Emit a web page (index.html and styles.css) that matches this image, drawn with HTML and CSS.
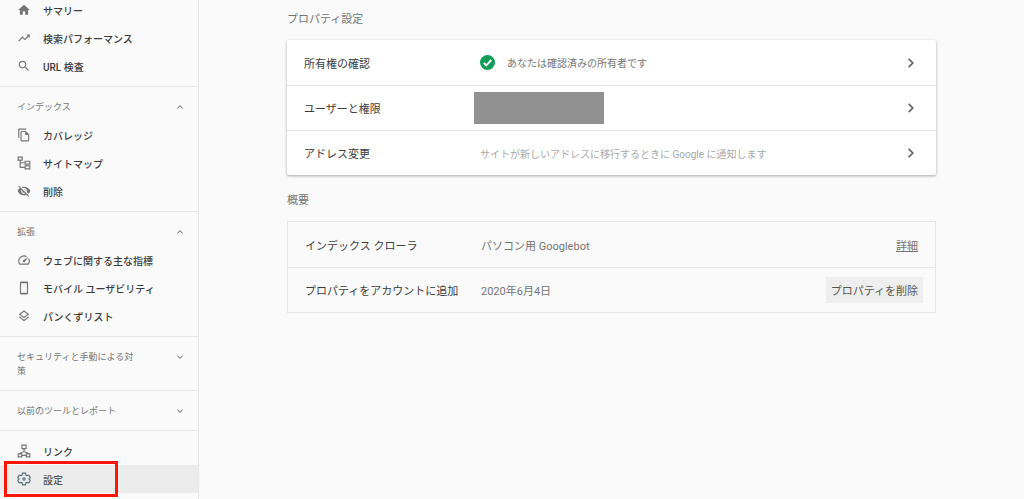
FILE: index.html
```html
<!DOCTYPE html>
<html lang="ja">
<head>
    <meta charset="UTF-8">
    <meta name="viewport" content="width=device-width, initial-scale=1.0">
    <title>設定</title>
    <link rel="stylesheet" href="styles.css">
</head>
<body>
    <div class="layout">
        <nav class="sidebar">
            <div class="group open">
                <a class="item" href="#">
                    <svg class="icon" viewBox="0 0 24 24"><path d="M10 20v-6h4v6h5v-8h3L12 3 2 12h3v8z"/></svg>
                    サマリー
                </a>
                <a class="item" href="#">
                    <svg class="icon" viewBox="0 0 24 24"><path d="M16 6l2.29 2.29-4.88 4.88-4-4L2 16.59 3.41 18l6-6 4 4 6.3-6.29L22 12V6z"/></svg>
                    検索パフォーマンス
                </a>
                <a class="item" href="#">
                    <svg class="icon" viewBox="0 0 24 24"><path d="M15.5 14h-.79l-.28-.27A6.47 6.47 0 0 0 16 9.5 6.5 6.5 0 1 0 9.5 16c1.61 0 3.09-.59 4.23-1.57l.27.28v.79l5 4.99L20.49 19l-4.99-5zm-6 0a4.5 4.5 0 1 1 0-9 4.5 4.5 0 0 1 0 9z"/></svg>
                    URL 検査
                </a>
            </div>

            <div class="group open">
                <button class="group-title" type="button">
                    インデックス
                    <svg class="icon chevron" viewBox="0 0 24 24"><path d="M12 8l-6 6 1.41 1.41L12 10.83l4.59 4.58L18 14z"/></svg>
                </button>
                <a class="item" href="#">
                    <svg class="icon" viewBox="0 0 24 24"><path d="M16 1H4a2 2 0 0 0-2 2v14h2V3h12V1zm-1 4H8a2 2 0 0 0-2 2v14c0 1.100.9 2 2 2h11a2 2 0 0 0 2-2V11l-6-6zM8 21V7h6v5h5v9H8z"/></svg>
                    カバレッジ
                </a>
                <a class="item" href="#">
                    <svg class="icon line" viewBox="0 0 24 24"><path d="M2 2h7v5H2zM14 9h8v5h-8zM14 17h8v5h-8zM5.500 7v12.500H14M5.500 11.500H14"/></svg>
                    サイトマップ
                </a>
                <a class="item" href="#">
                    <svg class="icon" viewBox="0 0 24 24"><path d="M12 7a5 5 0 0 1 4.640 6.830l2.920 2.920A11.820 11.820 0 0 0 22.990 12C21.260 7.610 16.990 4.500 11.990 4.500c-1.400 0-2.740.250-3.980.700l2.160 2.160C10.740 7.130 11.350 7 12 7zM2 4.270l2.280 2.280.460.460A11.800 11.800 0 0 0 1 12c1.730 4.390 6 7.500 11 7.500 1.550 0 3.030-.300 4.380-.840l.420.420L19.730 22 21 20.730 3.270 3 2 4.270zM7.530 9.800l1.550 1.550A2.820 2.820 0 0 0 9 12a3 3 0 0 0 3.650 2.920l1.550 1.550A5 5 0 0 1 7.530 9.800zm4.310-.780l3.150 3.150.020-.160a3 3 0 0 0-3-3l-.170.010z"/></svg>
                    削除
                </a>
            </div>

            <div class="group open">
                <button class="group-title" type="button">
                    拡張
                    <svg class="icon chevron" viewBox="0 0 24 24"><path d="M12 8l-6 6 1.41 1.41L12 10.83l4.59 4.58L18 14z"/></svg>
                </button>
                <a class="item" href="#">
                    <svg class="icon" viewBox="0 0 24 24"><path d="M20.380 8.570l-1.230 1.850a8 8 0 0 1-.220 7.580H5.070A8 8 0 0 1 15.580 6.850l1.850-1.230A10 10 0 0 0 3.350 19a2 2 0 0 0 1.720 1h13.850a2 2 0 0 0 1.740-1 10 10 0 0 0-.270-10.440zM10.590 15.410a2 2 0 0 0 2.830 0l5.660-8.490-8.490 5.660a2 2 0 0 0 0 2.830z"/></svg>
                    ウェブに関する主な指標
                </a>
                <a class="item" href="#">
                    <svg class="icon" viewBox="0 0 24 24"><path d="M17 1H7a2 2 0 0 0-2 2v18a2 2 0 0 0 2 2h10a2 2 0 0 0 2-2V3a2 2 0 0 0-2-2zm0 19H7V4h10v16z"/></svg>
                    モバイル ユーザビリティ
                </a>
                <a class="item" href="#">
                    <svg class="icon" viewBox="0 0 24 24"><path d="M11.990 18.540l-7.370-5.730L3 14.070l9 7 9-7-1.630-1.270-7.380 5.740zM12 16l7.360-5.730L21 9l-9-7-9 7 1.630 1.270L12 16zm0-11.470L17.740 9 12 13.470 6.260 9 12 4.530z"/></svg>
                    パンくずリスト
                </a>
            </div>

            <div class="group">
                <button class="group-title" type="button">
                    <span>セキュリティと手動による対策</span>
                    <svg class="icon chevron" viewBox="0 0 24 24"><path d="M16.590 8.590L12 13.170 7.410 8.590 6 10l6 6 6-6z"/></svg>
                </button>
            </div>

            <div class="group">
                <button class="group-title" type="button">
                    以前のツールとレポート
                    <svg class="icon chevron" viewBox="0 0 24 24"><path d="M16.590 8.590L12 13.170 7.410 8.590 6 10l6 6 6-6z"/></svg>
                </button>
            </div>

            <div class="group">
                <a class="item" href="#">
                    <svg class="icon line" viewBox="0 0 24 24"><path d="M8.500 2h7v6h-7zM2 17h6v5H2zM16 17h6v5h-6zM12 8v5M5 17v-1l7-3 7 3v1M8 19.500h8"/></svg>
                    リンク
                </a>
                <a class="item selected" href="#">
                    <svg class="icon line" viewBox="0 0 24 24"><path d="M9.500 2h5l.7 3.200 2 1.100 3.100-1 2.500 4.300-2.400 2.300v.2l2.400 2.300-2.500 4.300-3.100-1-2 1.100-.7 3.200h-5l-.7-3.200-2-1.100-3.100 1-2.500-4.300 2.400-2.300v-.2L1.200 9.600l2.500-4.300 3.100 1 2-1.100z"/><circle cx="12" cy="12" r="2"/></svg>
                    設定
                </a>
            </div>
        </nav>

        <main>
            <h2>プロパティ設定</h2>
            <div class="card raised">
                <a class="row" href="#">
                    <span class="label">所有権の確認</span>
                    <span class="value status">
                        <svg class="check" viewBox="0 0 24 24"><circle cx="12" cy="12" r="12"/><path d="M6 12.500l4 4 8-8.500"/></svg>
                        あなたは確認済みの所有者です
                    </span>
                    <svg class="arrow" viewBox="0 0 24 24"><path d="M8 5l7 7-7 7"/></svg>
                </a>
                <a class="row" href="#">
                    <span class="label">ユーザーと権限</span>
                    <span class="value"><span class="masked"></span></span>
                    <svg class="arrow" viewBox="0 0 24 24"><path d="M8 5l7 7-7 7"/></svg>
                </a>
                <a class="row" href="#">
                    <span class="label">アドレス変更</span>
                    <span class="value hint">サイトが新しいアドレスに移行するときに Google に通知します</span>
                    <svg class="arrow" viewBox="0 0 24 24"><path d="M8 5l7 7-7 7"/></svg>
                </a>
            </div>

            <h2>概要</h2>
            <div class="card outlined">
                <div class="row">
                    <span class="label">インデックス クローラ</span>
                    <span class="value">パソコン用 Googlebot</span>
                    <a class="detail" href="#">詳細</a>
                </div>
                <div class="row">
                    <span class="label">プロパティをアカウントに追加</span>
                    <span class="value">2020年6月4日</span>
                    <button class="remove" type="button">プロパティを削除</button>
                </div>
            </div>
        </main>
    </div>
</body>
</html>
```
FILE: styles.css
```css
*,
*::after {
    box-sizing: border-box;
}

body {
    margin: 0;
    background-color: #fafafa;
    color: #444;
    font-family: Roboto, "Noto Sans CJK JP", sans-serif;
    font-size: 11px;
}

a {
    color: inherit;
    text-decoration: none;
}

button {
    border: 0;
    font-family: inherit;
    cursor: pointer;
}

.layout {
    display: flex;
    min-height: 100vh;
}

/* Sidebar */
.sidebar {
    flex: 0 0 199px;
    margin-top: -4px;
    border-right: 1px solid #e6e6e6;
}

.group {
    padding: 6px 0 5px;
    border-top: 1px solid #e6e6e6;
}

.group:first-child {
    padding-top: 0;
    border-top: 0;
}

.group.open {
    padding-bottom: 6px;
}

.group-title {
    display: flex;
    justify-content: space-between;
    align-items: flex-start;
    width: 100%;
    padding: 7px 12px 7px 17px;
    background: none;
    color: #757575;
    font-size: 9px;
    line-height: 14px;
    text-align: left;
}

.group-title span {
    max-width: 120px;
}

.item {
    display: flex;
    align-items: center;
    gap: 12px;
    height: 28px;
    padding-left: 17px;
    color: #3c3c3c;
    font-size: 10px;
    font-weight: 500;
}

.icon {
    flex: none;
    width: 14px;
    height: 14px;
    fill: #757575;
}

.icon.line {
    fill: none;
    stroke: #757575;
    stroke-width: 2;
}

.icon.chevron {
    width: 12px;
    fill: #888;
}

.selected {
    position: relative;
    background-color: #ececec;
    color: #555;
}

.selected .icon {
    stroke: #546e7a;
}

/* red frame around the current page */
.selected::after {
    content: "";
    position: absolute;
    top: -4px;
    bottom: -4px;
    left: 4px;
    width: 114px;
    border: 3px solid #f91607;
}

/* Main */
main {
    flex: 1;
    padding: 10px 88px;
}

h2 {
    margin: 0 0 10px;
    color: #757575;
    font-size: 11px;
    font-weight: 400;
    line-height: 20px;
}

.card {
    margin-bottom: 16px;
}

.raised {
    border-radius: 2px;
    background-color: #fff;
    box-shadow: 0 1px 3px rgba(0, 0, 0, 0.35);
}

.outlined {
    border: 1px solid #e6e6e6;
}

.row {
    display: grid;
    grid-template-columns: 176px 1fr auto;
    align-items: center;
    height: 45px;
    padding: 0 17px;
}

.row + .row {
    border-top: 1px solid #e6e6e6;
}

.label {
    color: #3c3c3c;
}

.value {
    color: #757575;
}

.status {
    display: flex;
    align-items: center;
    gap: 12px;
    font-size: 10px;
}

.hint {
    color: #aaa;
    font-size: 10px;
}

.check {
    width: 15px;
    height: 15px;
    fill: #0f9d58;
}

.check path {
    fill: none;
    stroke: #fff;
    stroke-width: 3;
}

.masked {
    display: block;
    width: 130px;
    height: 32px;
    margin-left: -6px;
    background-color: #919191;
}

.arrow {
    width: 14px;
    height: 14px;
    margin-right: 1px;
    fill: none;
    stroke: #666;
    stroke-width: 3;
}

.detail {
    color: #757575;
    text-decoration: underline;
}

.remove {
    height: 26px;
    margin-right: -5px;
    padding: 0 5px;
    background-color: #eee;
    color: #555;
    font-size: 11px;
}
```
